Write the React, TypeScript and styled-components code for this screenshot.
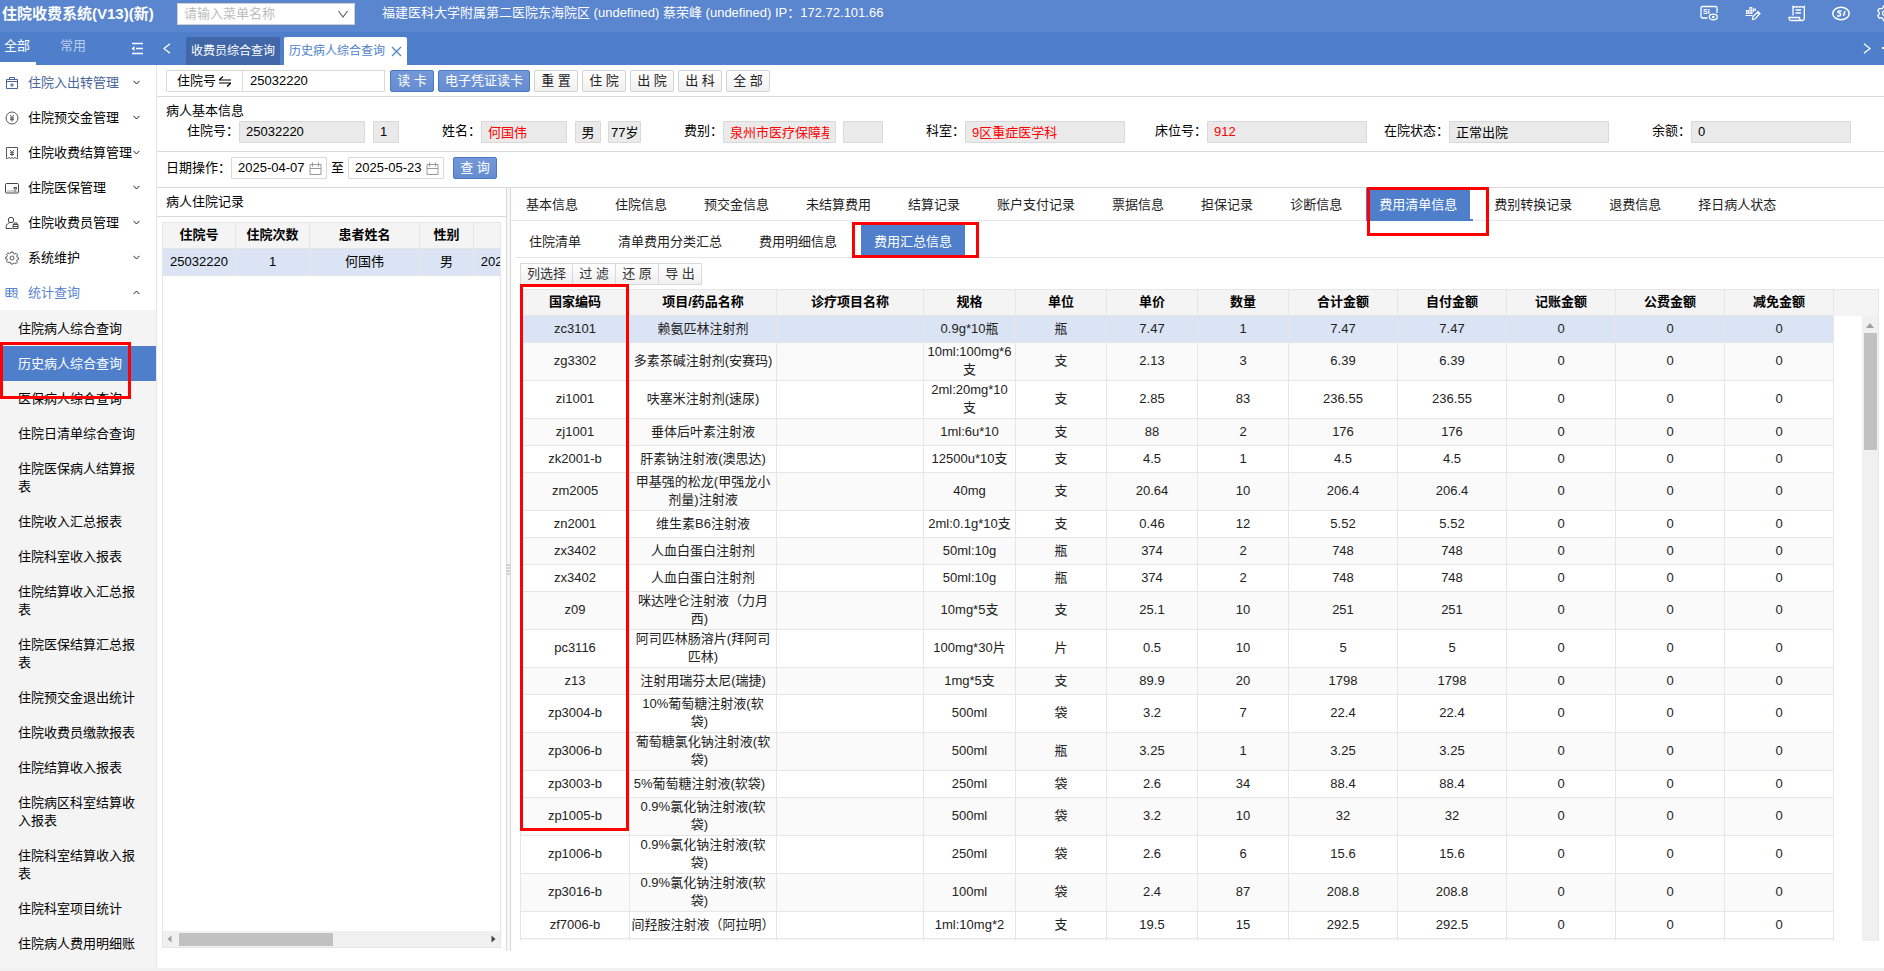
import React from 'react';
import styled, { createGlobalStyle, css } from 'styled-components';

const Global = createGlobalStyle`
  *, *::before, *::after { box-sizing: border-box; }
  html, body { margin: 0; }
  body {
    font-family: "Liberation Sans", "Noto Sans CJK SC", sans-serif;
    font-size: 13px;
    line-height: 18px;
    color: #000;
    background: #fff;
    overflow: hidden;
  }
  button, input { font: inherit; color: inherit; }
  a { color: inherit; text-decoration: none; }
`;

const line = '#d9d9d9';
const softLine = '#e6e6e6';
const blue = '#4f7fcb';

const Page = styled.div`
  height: 100vh;
  display: flex;
  flex-direction: column;
  border-bottom: 3px solid #f0f0f0;
`;

const Header = styled.header`
  flex: none;
  height: 32px;
  background: #5a85cf;
  color: #fff;
  display: flex;
  align-items: flex-start;
  overflow: hidden;
`;
const Brand = styled.h1`
  margin: 0;
  width: 175px;
  padding: 4px 0 0 2px;
  font-size: 15px;
  line-height: 20px;
  white-space: nowrap;
`;
const MenuSearch = styled.label`
  margin: 3px 27px 0 2px;
  width: 178px;
  height: 22px;
  padding: 0 6px;
  display: flex;
  align-items: center;
  background: #fff;
  border: 1px solid #d0d0d0;
  color: #666;
`;
const SearchInput = styled.input`
  flex: 1;
  min-width: 0;
  border: 0;
  padding: 0;
  outline: none;
  background: transparent;
  &::placeholder { color: #bcbcbc; }
`;
const Account = styled.div`
  padding-top: 4px;
  flex: 1;
  white-space: nowrap;
`;
const HeaderTools = styled.div`
  display: flex;
  gap: 26px;
  padding-top: 4px;
  margin-right: -10px;
`;
const IconButton = styled.button`
  border: 0;
  padding: 0;
  background: none;
  display: flex;
  color: inherit;
`;

const TabBar = styled.div`
  flex: none;
  height: 33px;
  background: ${blue};
  color: #fff;
  display: flex;
  align-items: flex-end;
`;
const MenuModes = styled.div`
  width: 157px;
  height: 33px;
  display: flex;
  padding-right: 14px;
`;
const MenuMode = styled.button<{ $on?: boolean }>`
  border: 0;
  background: none;
  padding: 0 ${p => (p.$on ? 6 : 0)}px 2px ${p => (p.$on ? 4 : 24)}px;
  color: ${p => (p.$on ? '#fff' : '#b9cdec')};
  border-bottom: 3px solid ${p => (p.$on ? '#fff' : 'transparent')};
`;
const Fold = styled(IconButton)`
  margin: 10px 0 0 auto;
`;
const Arrow = styled(IconButton)`
  padding: 0 11px 11px 6px;
`;
const PageTab = styled.button<{ $on?: boolean }>`
  border: 0;
  height: 28px;
  margin-left: 4px;
  padding: 0 5px;
  display: flex;
  align-items: center;
  gap: 6px;
  font-size: 12px;
  border-radius: 2px 2px 0 0;
  color: ${p => (p.$on ? blue : '#fff')};
  background: ${p => (p.$on ? '#fff' : '#4167a8')};
`;
const MoreTabs = styled(IconButton)`
  padding: 0 0 16px;
`;
const Spacer = styled.div`flex: 1;`;

const Body = styled.div`
  flex: 1;
  min-height: 0;
  display: flex;
`;

const Sidebar = styled.nav`
  position: relative;
  flex: none;
  width: 157px;
  border-right: 1px solid ${softLine};
  overflow: hidden;
`;
const Group = styled.button<{ $open?: boolean; $tint?: string }>`
  width: 100%;
  height: 35px;
  border: 0;
  background: none;
  padding: 0 16px 0 5px;
  display: flex;
  align-items: center;
  text-align: left;
  white-space: nowrap;
  color: ${p => p.$tint || '#000'};
  svg { flex: none; color: ${p => p.$tint || '#444'}; }
  svg:last-child { color: #222; }
`;
const GroupName = styled.span`
  flex: 1;
  min-width: 0;
  padding-left: 9px;
  margin-right: -8px;
  & + svg { margin-left: 8px; }
`;
const SubMenu = styled.div`
  background: #f4f4f4;
  padding-top: 1px;
  height: 100%;
`;
const SubItem = styled.a<{ $on?: boolean }>`
  display: block;
  padding: 9px 18px 8px;
  color: ${p => (p.$on ? '#fff' : '#000')};
  background: ${p => (p.$on ? blue : 'transparent')};
`;

const Main = styled.main`
  flex: 1;
  min-width: 0;
  display: flex;
  flex-direction: column;
`;
const Bar = styled.div`
  flex: none;
  height: 32px;
  padding: 5px 0 0 9px;
  display: flex;
  align-items: flex-start;
  gap: 4px;
  border-bottom: 1px solid ${line};
`;
const DateBar = styled(Bar)`
  height: 36px;
  line-height: 22px;
  gap: 0;
`;
const Until = styled.span`margin: 0 4px;`;
const Combo = styled.label`
  display: flex;
  width: 219px;
  height: 22px;
  line-height: 20px;
  margin-right: 1px;
  border: 1px solid ${line};
  border-radius: 1px;
`;
const ComboName = styled.span`
  width: 76px;
  padding-left: 10px;
  display: flex;
  align-items: center;
  gap: 3px;
  border-right: 1px solid ${line};
`;
const ComboInput = styled.input`
  flex: 1;
  min-width: 0;
  border: 0;
  padding: 0 7px;
  outline: none;
  background: transparent;
`;
const Btn = styled.button<{ $primary?: boolean; $wide?: boolean }>`
  width: ${p => (p.$wide ? 92 : 44)}px;
  height: 22px;
  padding: 0;
  line-height: 18px;
  white-space: nowrap;
  border-radius: 2px;
  border: 1px solid ${p => (p.$primary ? '#4a78c4' : '#d4d4d4')};
  color: ${p => (p.$primary ? '#fff' : '#222')};
  background: ${p => (p.$primary ? 'linear-gradient(#7499da, #658cd0)' : 'linear-gradient(#fff, #f0f0f0)')};
`;
const DateField = styled.label`
  width: 96px;
  height: 22px;
  border: 1px solid ${line};
  border-radius: 1px;
  padding: 0 4px 0 6px;
  display: flex;
  align-items: center;
  color: #000;
  svg { color: #999; flex: none; }
`;
const DateInput = styled.input`
  width: 100%;
  min-width: 0;
  border: 0;
  padding: 0;
  outline: none;
  background: transparent;
`;
const Query = styled(Btn)`margin-left: 9px;`;

const Info = styled.section`
  flex: none;
  height: 55px;
  padding-top: 5px;
  border-bottom: 1px solid ${line};
`;
const InfoTitle = styled.h2`
  margin: 0 0 1px;
  padding-left: 9px;
  font-size: 13px;
  font-weight: 400;
`;
const InfoGrid = styled.div`
  display: grid;
  grid-template-columns: repeat(7, 242px);
`;
const Field = styled.div`
  display: grid;
  grid-template-columns: 82px 160px;
  line-height: 20px;
`;
const FieldLabel = styled.label`
  text-align: right;
  white-space: nowrap;
`;
const Values = styled.div`
  display: flex;
  justify-content: space-between;
`;
const Value = styled.input<{ $w: number; $red?: boolean; $tight?: boolean }>`
  width: ${p => p.$w}px;
  height: 22px;
  padding: 0 ${p => (p.$tight ? 2 : 6)}px 2px;
  border: 1px solid ${line};
  border-radius: 1px;
  background: #eaeaea;
  color: ${p => (p.$red ? '#f00' : '#000')};
  outline: none;
`;

const Split = styled.div`
  flex: 1;
  min-height: 0;
  display: flex;
  padding-bottom: 17px;
`;
const Records = styled.section`
  flex: none;
  width: 349px;
  display: flex;
  flex-direction: column;
`;
const RecordsTitle = styled.h2`
  margin: 0;
  height: 29px;
  padding: 5px 0 0 9px;
  font-size: 13px;
  font-weight: 400;
  border-bottom: 1px solid ${line};
`;
const RecordsBox = styled.div`
  flex: 1;
  margin: 5px 5px 3px 5px;
  border: 1px solid ${softLine};
  display: flex;
  flex-direction: column;
  overflow: hidden;
`;
const Table = styled.table<{ $w: number }>`
  width: ${p => p.$w}px;
  table-layout: fixed;
  border-collapse: separate;
  border-spacing: 0;
  text-align: center;
`;
const Th = styled.th`
  height: 26px;
  padding: 0 0 1px;
  background: #f4f4f4;
  border-right: 1px solid ${softLine};
  border-bottom: 1px solid ${softLine};
  white-space: nowrap;
`;
const Td = styled.td`
  height: 27px;
  padding: 0 0 1px;
  border-right: 1px solid ${softLine};
  border-bottom: 1px solid ${softLine};
  white-space: pre;
`;
const Tr = styled.tr<{ $on?: boolean }>`
  background: ${p => (p.$on ? '#dbe4f5' : '#fff')};
  ${p => !p.$on && css`&:nth-child(even) { background: #fafafa; }`}
`;
const HScroll = styled.div`
  margin-top: auto;
  height: 16px;
  padding: 0 4px;
  display: flex;
  align-items: center;
  justify-content: space-between;
  background: #f0f0f0;
`;
const HThumb = styled.div`
  width: 154px;
  height: 13px;
  margin: 0 auto 0 7px;
  background: #c1c1c1;
`;
const Splitter = styled.div`
  flex: none;
  width: 5px;
  display: flex;
  align-items: center;
  justify-content: center;
  border: solid ${line};
  border-width: 0 1px;
  background: #f7f7f7;
  color: #aaa;
`;

const Detail = styled.section`
  flex: 1;
  min-width: 0;
  display: flex;
  flex-direction: column;
`;
const Tabs = styled.div<{ $sub?: boolean }>`
  flex: none;
  height: ${p => (p.$sub ? 37 : 33)}px;
  padding: ${p => (p.$sub ? '4px 0 1px 1px' : '0 0 0 2px')};
  margin-left: ${p => (p.$sub ? 4 : 0)}px;
  display: flex;
  gap: 11px;
  border-bottom: 1px solid ${softLine};
`;
const Tab = styled.button<{ $on?: boolean; $line?: boolean }>`
  position: relative;
  border: 0;
  padding: 2px 13px 0;
  white-space: nowrap;
  color: ${p => (p.$on ? '#fff' : '#222')};
  background: ${p => (p.$on ? blue : 'none')};
  ${p => p.$line && css`
    &::after {
      content: '';
      position: absolute;
      left: 0;
      right: -3px;
      bottom: -1px;
      height: 2px;
      background: ${blue};
    }
  `}
`;
const GridTools = styled.div`
  flex: none;
  display: flex;
  margin: 5px 0 4px 9px;
`;
const GridTool = styled.button`
  height: 22px;
  min-width: 44px;
  padding: 0 6px;
  margin-right: -1px;
  border: 1px solid ${line};
  color: #333;
  background: linear-gradient(#fff, #f0f0f0);
  line-height: 18px;
`;
const GridBox = styled.div`
  flex: 1;
  min-height: 0;
  position: relative;
  margin: 0 5px 10px 9px;
  border: 1px solid ${softLine};
  border-bottom: 0;
  display: flex;
  flex-direction: column;
`;
const GridHead = styled.div`
  flex: none;
  background: #f4f4f4;
`;
const GridBody = styled.div`
  flex: 1;
  min-height: 0;
  display: flex;
  justify-content: space-between;
  overflow: hidden;
  color: #222;
`;
const VScroll = styled.div`
  flex: none;
  width: 16px;
  background: #f0f0f0;
  display: flex;
  flex-direction: column;
  align-items: center;
  gap: 4px;
  padding-top: 7px;
  color: #a0a0a0;
`;
const VThumb = styled.div`
  width: 13px;
  height: 117px;
  margin-top: 1px;
  background: #c1c1c1;
`;

/* Red frame laid over the part that it calls out */
const Mark = styled.span<{ $t: number; $l: number; $w: number; $h: number }>`
  position: absolute;
  z-index: 2;
  pointer-events: none;
  top: ${p => p.$t}px;
  left: ${p => p.$l}px;
  width: ${p => p.$w}px;
  height: ${p => p.$h}px;
  border: 3px solid #f00;
`;

const LogoText = styled.text`
  font: bold 7px "Liberation Sans", sans-serif;
  fill: currentColor;
  stroke: none;
`;

const Svg = ({ w = 14, h = w, box = `0 0 ${w} ${h}`, sw = 1, children }: {
  w?: number; h?: number; box?: string; sw?: number; children: React.ReactNode;
}) => (
  <svg width={w} height={h} viewBox={box} fill="none" stroke="currentColor" strokeWidth={sw} aria-hidden="true">
    {children}
  </svg>
);

const Chevron = ({ up }: { up?: boolean }) => (
  <Svg w={7} h={5}><path d={up ? 'M.5 4.2 3.5 1l3 3.2' : 'M.5.8l3 3.2 3-3.2'} /></Svg>
);

const groupIcons = [
  <Svg key="a"><path d="M1.500 3.500h11v9h-11zM4.500 3.500v-2h5v2M1.500 5.500h11M7 7v4M5 9h4" /></Svg>,
  <Svg key="b" sw={0.9}><circle cx="7" cy="7" r="6" /><path d="M5 4l2 2.500L9 4M7 6.500v4M5 7h4M5 8.700h4" /></Svg>,
  <Svg key="c" sw={0.9}><path d="M2.500 12.500h-1v-11h11v11h-1l-1.500-1-1.500 1-1.500-1-1.500 1-1.500-1zM5 4l2 2.300L9 4M7 6.300v3.700M5 6.800h4M5 8.500h4" /></Svg>,
  <Svg key="d"><rect x=".5" y="2.500" width="13" height="9.500" rx="1" /><path d="M9 6.500h2.500v1.500H9zM2.500 10h1M4.500 10h1M6.500 10h1M8.500 10h3" /></Svg>,
  <Svg key="e"><circle cx="6" cy="4" r="2.700" /><path d="M4.500 6.500C2 7.800 1 9.500 1 12.500h6M8 8.500h5v4H8zM9 8.500V7h3v1.500M8 10.500h5" /></Svg>,
  <Svg key="f" sw={0.9}><path d="M5.900 1h2.200l.4 1.600 1.100.5 1.400-.9 1.500 1.500-.8 1.400.5 1.100 1.300.4v1.800l-1.400.4-.5 1.100.8 1.400-1.500 1.500-1.400-.8-1.100.4L8.100 13H5.900l-.4-1.600-1.100-.4-1.400.8-1.500-1.500.8-1.400-.5-1.100L.6 7.900V6.100l1.300-.4.4-1.100-.8-1.400L3 1.800l1.400.8 1.100-.4z" /><circle cx="7" cy="7" r="2" /></Svg>,
  <Svg key="g"><path d="M1 2.500h11v6M1 2.500v8h6M1 5h11M1 7.700h6M4.500 2.500v8M8.200 2.500v4.500" /><circle cx="9.800" cy="9.300" r="2" /><path d="m11.300 10.800 2 2" /></Svg>,
];
const groups = ['住院入出转管理', '住院预交金管理', '住院收费结算管理', '住院医保管理', '住院收费员管理', '系统维护', '统计查询'];
const subItems = ['住院病人综合查询', '历史病人综合查询', '医保病人综合查询', '住院日清单综合查询', '住院医保病人结算报表', '住院收入汇总报表', '住院科室收入报表', '住院结算收入汇总报表', '住院医保结算汇总报表', '住院预交金退出统计', '住院收费员缴款报表', '住院结算收入报表', '住院病区科室结算收入报表', '住院科室结算收入报表', '住院科室项目统计', '住院病人费用明细账'];

type V = { v: string; w: number; red?: boolean; tight?: boolean };
const fields: { label: string; values: V[] }[] = [
  { label: '住院号', values: [{ v: '25032220', w: 126 }, { v: '1', w: 26 }] },
  { label: '姓名', values: [{ v: '何国伟', w: 86, red: true }, { v: '男', w: 26 }, { v: '77岁', w: 33, tight: true }] },
  { label: '费别', values: [{ v: '泉州市医疗保障基金', w: 113, red: true }, { v: '', w: 40 }] },
  { label: '科室', values: [{ v: '9区重症医学科', w: 160, red: true }] },
  { label: '床位号', values: [{ v: '912', w: 160, red: true }] },
  { label: '在院状态', values: [{ v: '正常出院', w: 160 }] },
  { label: '余额', values: [{ v: '0', w: 160 }] },
];

const tabs = ['基本信息', '住院信息', '预交金信息', '未结算费用', '结算记录', '账户支付记录', '票据信息', '担保记录', '诊断信息', '费用清单信息', '费别转换记录', '退费信息', '择日病人状态'];
const subTabs = ['住院清单', '清单费用分类汇总', '费用明细信息', '费用汇总信息'];
const columns: [string, number][] = [['国家编码', 109], ['项目/药品名称', 147], ['诊疗项目名称', 147], ['规格', 92], ['单位', 91], ['单价', 91], ['数量', 91], ['合计金额', 109], ['自付金额', 109], ['记账金额', 109], ['公费金额', 109], ['减免金额', 109]];
const recordColumns: [string, number][] = [['住院号', 73], ['住院次数', 74], ['患者姓名', 110], ['性别', 54], ['', 110]];
const drugs: [string, string, string, string, string, string, string][] = [
  ['zc3101', '赖氨匹林注射剂', '0.9g*10瓶', '瓶', '7.47', '1', '7.47'],
  ['zg3302', '多素茶碱注射剂(安赛玛)', '10ml:100mg*6\n支', '支', '2.13', '3', '6.39'],
  ['zi1001', '呋塞米注射剂(速尿)', '2ml:20mg*10\n支', '支', '2.85', '83', '236.55'],
  ['zj1001', '垂体后叶素注射液', '1ml:6u*10', '支', '88', '2', '176'],
  ['zk2001-b', '肝素钠注射液(澳思达)', '12500u*10支', '支', '4.5', '1', '4.5'],
  ['zm2005', '甲基强的松龙(甲强龙小\n剂量)注射液', '40mg', '支', '20.64', '10', '206.4'],
  ['zn2001', '维生素B6注射液', '2ml:0.1g*10支', '支', '0.46', '12', '5.52'],
  ['zx3402', '人血白蛋白注射剂', '50ml:10g', '瓶', '374', '2', '748'],
  ['zx3402', '人血白蛋白注射剂', '50ml:10g', '瓶', '374', '2', '748'],
  ['z09', '咪达唑仑注射液（力月\n西)  ', '10mg*5支', '支', '25.1', '10', '251'],
  ['pc3116', '阿司匹林肠溶片(拜阿司\n匹林)', '100mg*30片', '片', '0.5', '10', '5'],
  ['z13', '注射用瑞芬太尼(瑞捷)', '1mg*5支', '支', '89.9', '20', '1798'],
  ['zp3004-b', '10%葡萄糖注射液(软\n袋)  ', '500ml', '袋', '3.2', '7', '22.4'],
  ['zp3006-b', '葡萄糖氯化钠注射液(软\n袋)  ', '500ml', '瓶', '3.25', '1', '3.25'],
  ['zp3003-b', '5%葡萄糖注射液(软袋)  ', '250ml', '袋', '2.6', '34', '88.4'],
  ['zp1005-b', '0.9%氯化钠注射液(软\n袋)  ', '500ml', '袋', '3.2', '10', '32'],
  ['zp1006-b', '0.9%氯化钠注射液(软\n袋)  ', '250ml', '袋', '2.6', '6', '15.6'],
  ['zp3016-b', '0.9%氯化钠注射液(软\n袋)  ', '100ml', '袋', '2.4', '87', '208.8'],
  ['zf7006-b', '间羟胺注射液（阿拉明）', '1ml:10mg*2', '支', '19.5', '15', '292.5'],
  ['', '', '', '', '', '', ''],
];

const Cols = ({ of }: { of: [string, number][] }) => (
  <colgroup>{of.map(([n, w]) => <col key={n} style={{ width: w }} />)}</colgroup>
);
const Calendar = () => (
  <Svg w={13}><path d="M1 2.500h11v10H1zM1 6.500h11M3.500 .5v4M9.500 .5v4" /></Svg>
);

export default function App() {
  return (
    <Page>
      <Global />
      <Header>
        <Brand>住院收费系统(V13)(新)</Brand>
        <MenuSearch>
          <SearchInput placeholder="请输入菜单名称" aria-label="菜单名称" />
          <Svg w={10} h={8} sw={1.200}><path d="M.5 1 5 7l4.500-6" /></Svg>
        </MenuSearch>
        <Account>福建医科大学附属第二医院东海院区 (undefined) 蔡荣峰 (undefined) IP：172.72.101.66</Account>
        <HeaderTools>
          <IconButton aria-label="医保查看">
            <Svg w={18} sw={1.300}><path d="M7.500 14H2.500Q1 14 1 12.500V4q0-1.500 1.500-1.500h13Q17 2.500 17 4v5" /><LogoText x="3" y="10">SI</LogoText><ellipse cx="13.300" cy="13" rx="4" ry="2.800" /><circle cx="13.300" cy="13" r=".7" /></Svg>
          </IconButton>
          <IconButton aria-label="统计">
            <Svg w={18} sw={1.200}><path d="M2.500 9.500V6.500h1.800v3zM6 9.500v-6h1.800v6zM9.500 8V5h1.800v2M1.500 11.500h7M8.500 15.500l.5-3 5-5 2 2-5 5.500zM13 8.500l2 2" /></Svg>
          </IconButton>
          <IconButton aria-label="票据">
            <Svg w={18} sw={1.300}><path d="M5 11.500V2.500l1.300.8 1.400-.8 1.300.8 1.400-.8 1.300.8 1.400-.8 1.300.8 1.900-.8V14q0 2.500-2 2.500H3q-2 0-2-3h10.500q0 3 2 3M7.500 6H13M7.500 9H13" /></Svg>
          </IconButton>
          <IconButton aria-label="医保">
            <Svg w={18} sw={1.500}><ellipse cx="9" cy="9.500" rx="8.200" ry="6.300" /><path d="M9.500 7H7.500Q5.500 7 6 8.500l2.500 1Q9 12 7 12H5M13 7l-1.500 5" /></Svg>
          </IconButton>
          <IconButton aria-label="设置">
            <Svg w={18} sw={1.300}><path d="M7.500 2h3l.6 2 1.600.9 2-.5 1.500 2.500-1.400 1.500v1.800l1.400 1.500-1.500 2.500-2-.5-1.600.9-.6 2h-3l-.6-2-1.600-.9-2 .5-1.500-2.500 1.400-1.500V8.400L1.800 6.900l1.500-2.500 2 .5L6.900 4z" /><circle cx="9" cy="9.300" r="2.500" /></Svg>
          </IconButton>
        </HeaderTools>
      </Header>
      <TabBar>
        <MenuModes>
          <MenuMode $on>全部</MenuMode>
          <MenuMode>常用</MenuMode>
          <Fold aria-label="收起菜单"><Svg w={12} h={13} sw={1.400}><path d="M1 1.500h11M5 6.500h7M1 11.500h11" /><path d="M3.500 4v5L.5 6.500z" fill="currentColor" stroke="none" /></Svg></Fold>
        </MenuModes>
        <Arrow aria-label="向左"><Svg w={8} h={11} sw={1.300}><path d="M7 .8 1 5.500 7 10.200" /></Svg></Arrow>
        <PageTab>收费员综合查询</PageTab>
        <PageTab $on>历史病人综合查询<Svg w={11} sw={1.200}><path d="m1 1 9 9M10 1l-9 9" /></Svg></PageTab>
        <Spacer />
        <Arrow aria-label="向右"><Svg w={8} h={11} sw={1.300}><path d="M1 .8 7 5.500 1 10.200" /></Svg></Arrow>
        <MoreTabs aria-label="更多"><Svg w={2} h={2} sw={2}><path d="M0 1h2" /></Svg></MoreTabs>
      </TabBar>
      <Body>
        <Sidebar>
          {groups.map((g, i) => (
            <Group key={g} $tint={i === 0 ? '#48649a' : i === 6 ? '#5a85cf' : undefined}>
              {groupIcons[i]}<GroupName>{g}</GroupName><Chevron up={i === 6} />
            </Group>
          ))}
          <SubMenu>
            {subItems.map((s, i) => <SubItem key={s} href="#" $on={i === 1}>{s}</SubItem>)}
          </SubMenu>
          <Mark $t={277} $l={0} $w={131} $h={57} />
        </Sidebar>
        <Main>
          <Bar>
            <Combo>
              <ComboName>住院号
                <Svg w={12} h={11} sw={1.200}><path d="M0 4h12M0 4l4-3.500M0 7h12M12 7l-4 3.500" /></Svg>
              </ComboName>
              <ComboInput defaultValue="25032220" />
            </Combo>
            <Btn $primary>读 卡</Btn>
            <Btn $primary $wide>电子凭证读卡</Btn>
            {['重 置', '住 院', '出 院', '出 科', '全 部'].map(b => <Btn key={b}>{b}</Btn>)}
          </Bar>
          <Info>
            <InfoTitle>病人基本信息</InfoTitle>
            <InfoGrid>
              {fields.map((f, i) => (
                <Field key={f.label}>
                  <FieldLabel htmlFor={`f${i}`}>{f.label}：</FieldLabel>
                  <Values>
                    {f.values.map((x, j) => (
                      <Value key={j} id={j ? undefined : `f${i}`} aria-label={j ? f.label : undefined}
                        $w={x.w} $red={x.red} $tight={x.tight} defaultValue={x.v} readOnly />
                    ))}
                  </Values>
                </Field>
              ))}
            </InfoGrid>
          </Info>
          <DateBar>
            <span>日期操作：</span>
            <DateField><DateInput defaultValue="2025-04-07" aria-label="开始日期" /><Calendar /></DateField>
            <Until>至</Until>
            <DateField><DateInput defaultValue="2025-05-23" aria-label="结束日期" /><Calendar /></DateField>
            <Query $primary>查 询</Query>
          </DateBar>
          <Split>
            <Records>
              <RecordsTitle>病人住院记录</RecordsTitle>
              <RecordsBox>
                <Table $w={421}>
                  <Cols of={recordColumns} />
                  <thead><tr>{recordColumns.map(([n]) => <Th key={n}>{n}</Th>)}</tr></thead>
                  <tbody>
                    <Tr $on><Td>25032220</Td><Td>1</Td><Td>何国伟</Td><Td>男</Td><Td>2025-04-07 10:2</Td></Tr>
                  </tbody>
                </Table>
                <HScroll>
                  <Svg w={5} h={8}><path d="M4.500.5v7L.5 4z" fill="#a0a0a0" stroke="none" /></Svg>
                  <HThumb />
                  <Svg w={5} h={8}><path d="M.5.5v7l4-3.500z" fill="#444" stroke="none" /></Svg>
                </HScroll>
              </RecordsBox>
            </Records>
            <Splitter><Svg w={3} h={12}><path d="M0 1h3M0 4h3M0 7h3M0 10h3" /></Svg></Splitter>
            <Detail>
              <Tabs>
                {tabs.map((t, i) => (
                  <Tab key={t} $on={i === 9} $line={i === 9}>{t}{i === 9 && <Mark $t={-1} $l={1} $w={122} $h={49} />}</Tab>
                ))}
              </Tabs>
              <Tabs $sub>
                {subTabs.map((t, i) => (
                  <Tab key={t} $on={i === 3}>{t}{i === 3 && <Mark $t={-3} $l={-9} $w={127} $h={36} />}</Tab>
                ))}
              </Tabs>
              <GridTools>
                {['列选择', '过 滤', '还 原', '导 出'].map(b => <GridTool key={b}>{b}</GridTool>)}
              </GridTools>
              <GridBox>
                <Mark $t={-6} $l={-1} $w={109} $h={547} />
                <GridHead>
                  <Table $w={1313}>
                    <Cols of={columns} />
                    <thead><tr>{columns.map(([n]) => <Th key={n}>{n}</Th>)}</tr></thead>
                  </Table>
                </GridHead>
                <GridBody>
                  <div>
                    <Table $w={1313}>
                      <Cols of={columns} />
                      <tbody>
                        {drugs.map(([code, name, spec, unit, price, qty, sum], i) => (
                          <Tr key={i} $on={i === 0}>
                            <Td>{code}</Td><Td>{name}</Td><Td /><Td>{spec}</Td><Td>{unit}</Td><Td>{price}</Td><Td>{qty}</Td>
                            <Td>{sum}</Td><Td>{sum}</Td><Td>{code && 0}</Td><Td>{code && 0}</Td><Td>{code && 0}</Td>
                          </Tr>
                        ))}
                      </tbody>
                    </Table>
                  </div>
                  <VScroll>
                    <Svg w={8} h={5}><path d="M4 0l4 5H0z" fill="currentColor" stroke="none" /></Svg>
                    <VThumb />
                  </VScroll>
                </GridBody>
              </GridBox>
            </Detail>
          </Split>
        </Main>
      </Body>
    </Page>
  );
}
